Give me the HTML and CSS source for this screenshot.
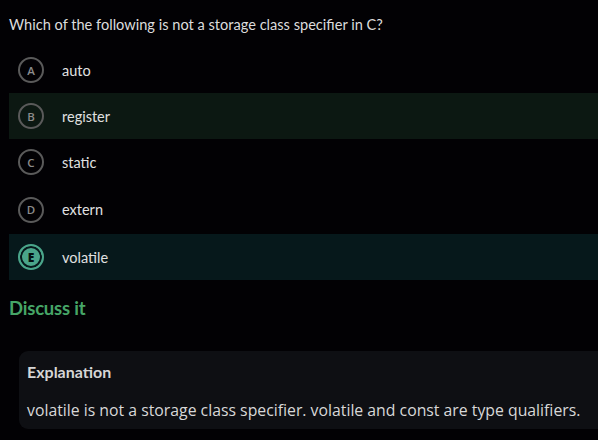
FILE: index.html
```html
<!DOCTYPE html>
<html>
<head>
<meta charset="utf-8">
<link rel="stylesheet" href="styles.css">
</head>
<body>
<div class="page">
  <p class="question">Which of the following is not a storage class specifier in C?</p>
  <ul class="options">
    <li class="option"><span class="badge">A</span><span class="label">auto</span></li>
    <li class="option wrong"><span class="badge">B</span><span class="label">register</span></li>
    <li class="option"><span class="badge">C</span><span class="label">static</span></li>
    <li class="option tall"><span class="badge">D</span><span class="label">extern</span></li>
    <li class="option correct"><span class="badge">E</span><span class="label">volatile</span></li>
  </ul>
  <div class="discuss">Discuss it</div>
  <div class="explanation">
    <div class="exp-title">Explanation</div>
    <div class="exp-text">volatile is not a storage class specifier. volatile and const are type qualifiers.</div>
  </div>
</div>
</body>
</html>
```
FILE: styles.css
```css
html, body {
  margin: 0;
  padding: 0;
  background: #020104;
  overflow: hidden;
}
.page {
  width: 598px;
  height: 440px;
  font-family: "Lato", "Noto Sans", sans-serif;
  color: #e2e2e2;
}
.question {
  margin: 0;
  padding: 15px 0 0 9px;
  height: 32px;
  font-size: 14.6px;
  line-height: 20px;
  color: #dcdcdc;
}
.options {
  list-style: none;
  margin: 0;
  padding: 0 0 0 9px;
}
.option {
  display: flex;
  align-items: center;
  height: 46px;
  padding-left: 9px;
}
.option.tall { height: 49px; }
.option.wrong { background: #0c1812; }
.option.correct { background: #06181b; }
.badge {
  box-sizing: border-box;
  width: 26px;
  height: 26px;
  border: 2px solid #5a5a5a;
  border-radius: 50%;
  display: flex;
  align-items: center;
  justify-content: center;
  font-family: "Open Sans", sans-serif;
  font-size: 11.5px;
  font-weight: 600;
  color: #8c8c8c;
  margin-right: 18px;
}
.option.correct .badge {
  border-color: #4aa58a;
  background: #4aa58a;
  box-shadow: inset 0 0 0 2px #06181b;
  color: #031010;
  font-weight: 800;
  font-size: 12px;
}
.label {
  font-size: 14.5px;
  color: #e0e0e0;
}
.discuss {
  margin: 17px 0 0 9px;
  height: 22px;
  font-size: 18.5px;
  font-weight: 700;
  color: #46a567;
  letter-spacing: -0.2px;
}
.explanation {
  margin: 32px -20px 0 19px;
  height: 78px;
  box-sizing: border-box;
  background: #0e0f13;
  border-radius: 9px;
  padding: 11px 0 0 8px;
}
.exp-title {
  font-size: 16px;
  font-weight: 700;
  color: #d6d6d6;
  height: 38px;
  line-height: 20px;
}
.exp-text {
  font-family: "Open Sans", "Noto Sans", sans-serif;
  font-size: 15.8px;
  line-height: 20px;
  color: #d8d8d8;
}
```
